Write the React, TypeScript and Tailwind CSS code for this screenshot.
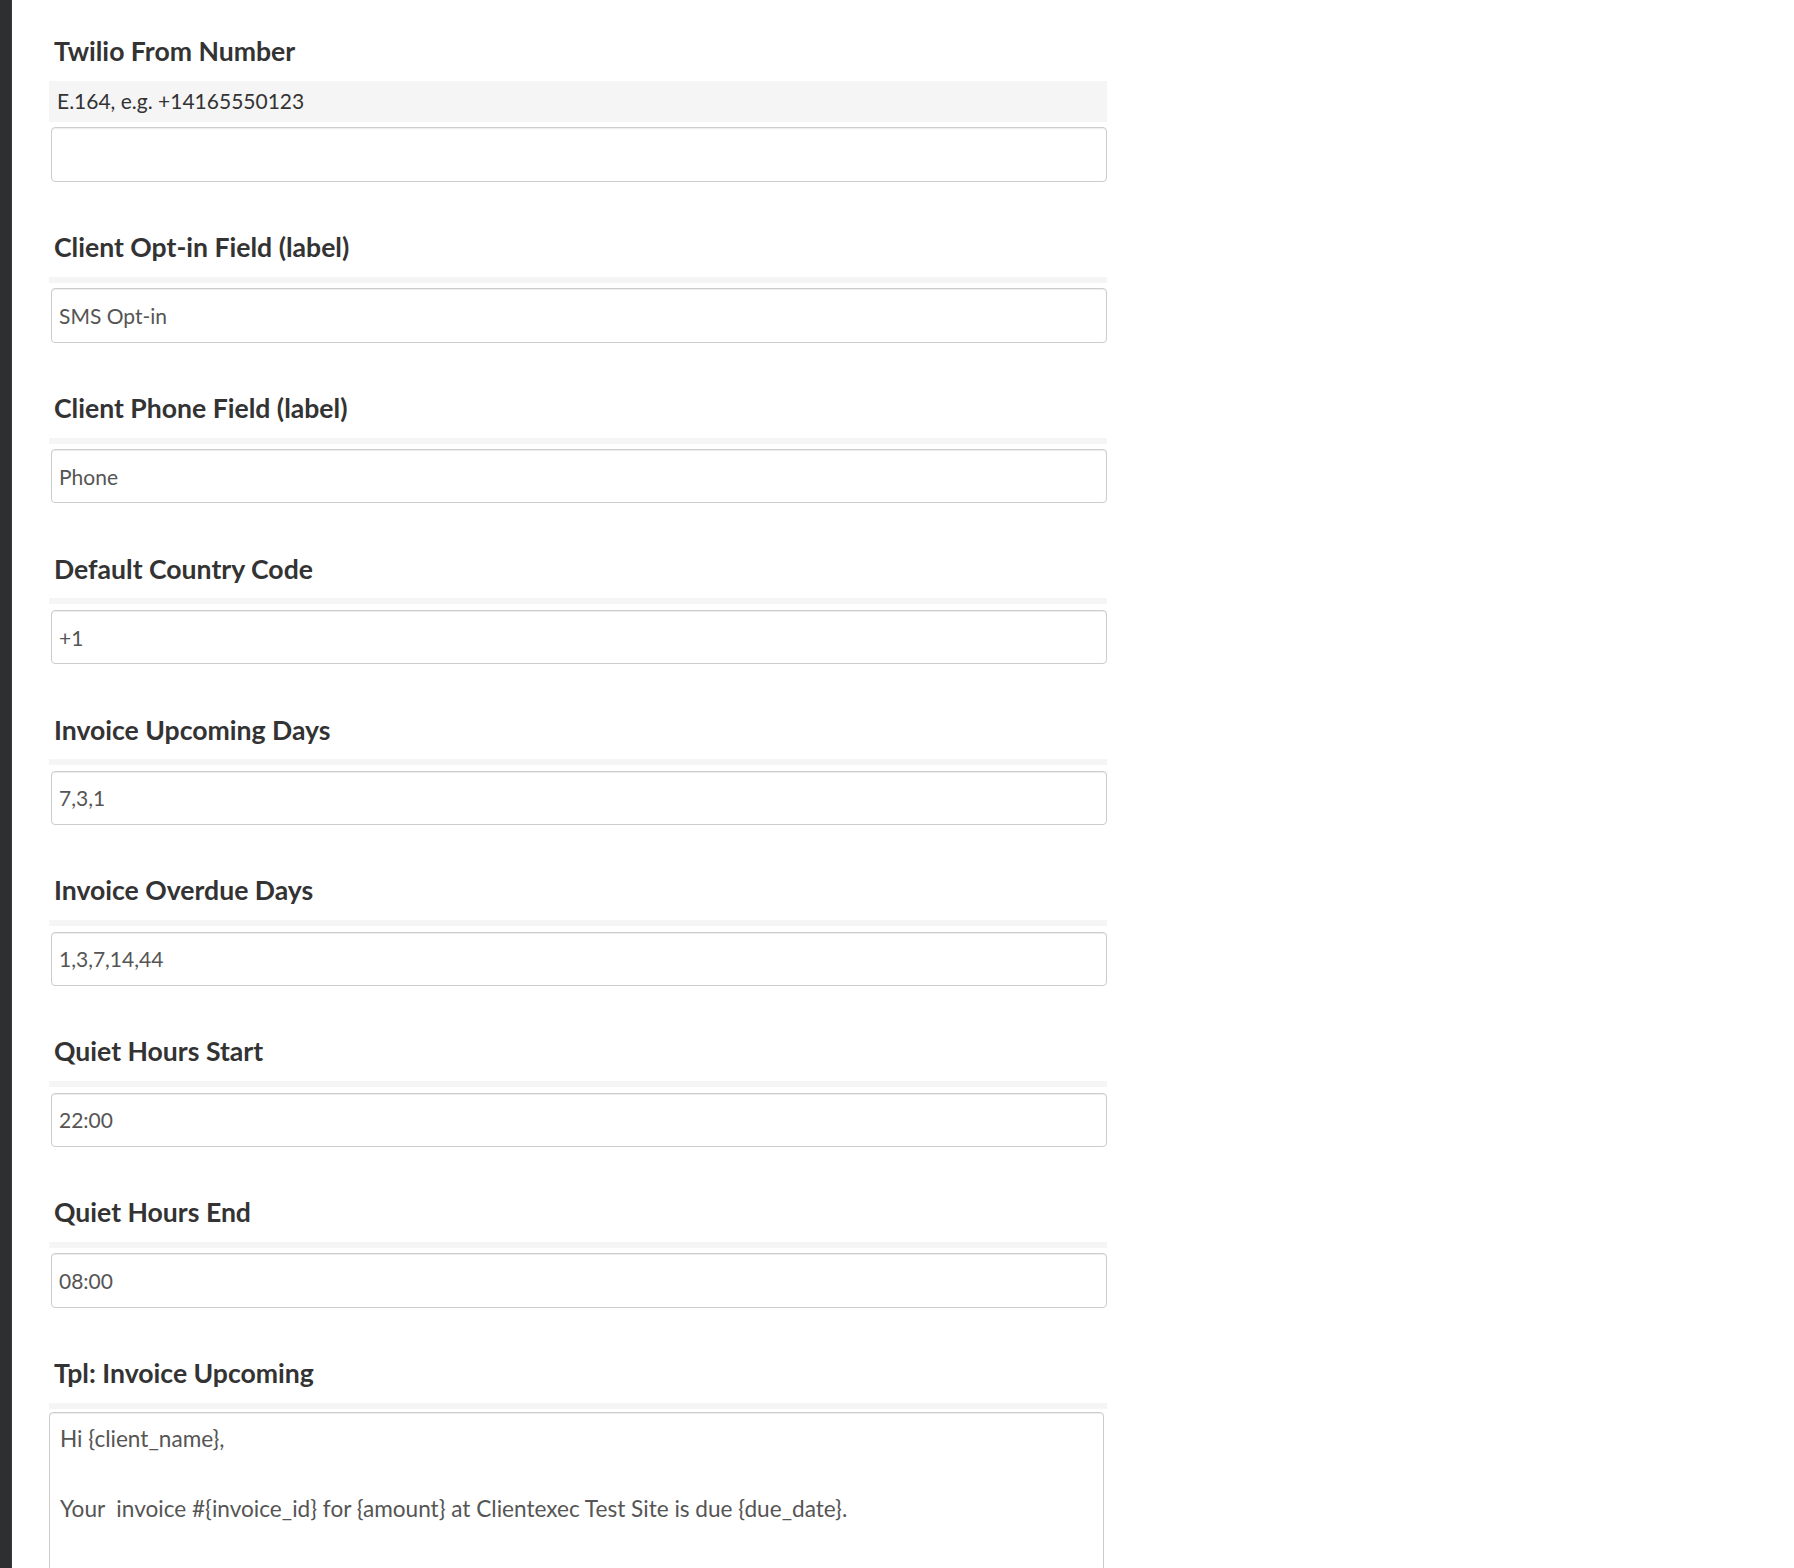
const fields = [
  { label: "Twilio From Number", help: "E.164, e.g. +14165550123", value: "" },
  { label: "Client Opt-in Field (label)", value: "SMS Opt-in" },
  { label: "Client Phone Field (label)", value: "Phone" },
  { label: "Default Country Code", value: "+1" },
  { label: "Invoice Upcoming Days", value: "7,3,1" },
  { label: "Invoice Overdue Days", value: "1,3,7,14,44" },
  { label: "Quiet Hours Start", value: "22:00" },
  { label: "Quiet Hours End", value: "08:00" },
];

const template =
  "Hi {client_name},\n\nYour  invoice #{invoice_id} for {amount} at Clientexec Test Site is due {due_date}.\n\n";

const font = "font-['Lato','Liberation_Sans',sans-serif]";

const Heading = ({ children }: { children: string }) => (
  <h3 className={`pl-[5px] text-[26.6px] leading-[32px] font-bold text-[#333] ${font}`}>{children}</h3>
);

const HelpBox = ({ text }: { text?: string }) => (
  <div
    className={`mt-[13.8px] bg-[#f5f5f5] py-[3px] pl-[8px] text-[21px] leading-[34.7px] text-[#333] ${font} ${
      text ? "" : "h-[6px] py-0"
    }`}
  >
    {text}
  </div>
);

export default function App() {
  return (
    <div className="flex min-h-[1568px] w-full bg-white">
      <div className="w-[12px] shrink-0 bg-[#2e2f30] border-r border-[#3a3b3c]" />
      <div className="ml-[37px] w-[1058px] pt-[35.3px]">
        {fields.map((field) => (
          <section className="mb-[49.2px]" key={field.label}>
            <Heading>{field.label}</Heading>
            <HelpBox text={field.help} />
            <input
              className={`mt-[5.5px] ml-[2px] block h-[54.4px] w-[1056px] rounded-[4px] border border-[#ccc] bg-white px-[7px] text-[21px] text-[#555] shadow-[inset_0_1px_1px_rgba(0,0,0,0.075)] outline-none ${font}`}
              defaultValue={field.value}
              type="text"
            />
          </section>
        ))}

        <section>
          <Heading>Tpl: Invoice Upcoming</Heading>
          <HelpBox />
          <textarea
            className={`mt-[3.2px] block h-[220px] w-[1055px] resize-none rounded-[4px] border border-[#ccc] bg-white px-[10px] pt-[7.8px] pb-[5px] text-[22.6px] leading-[35px] text-[#555] shadow-[inset_0_1px_1px_rgba(0,0,0,0.075)] outline-none ${font}`}
            defaultValue={template}
          />
        </section>
      </div>
    </div>
  );
}
